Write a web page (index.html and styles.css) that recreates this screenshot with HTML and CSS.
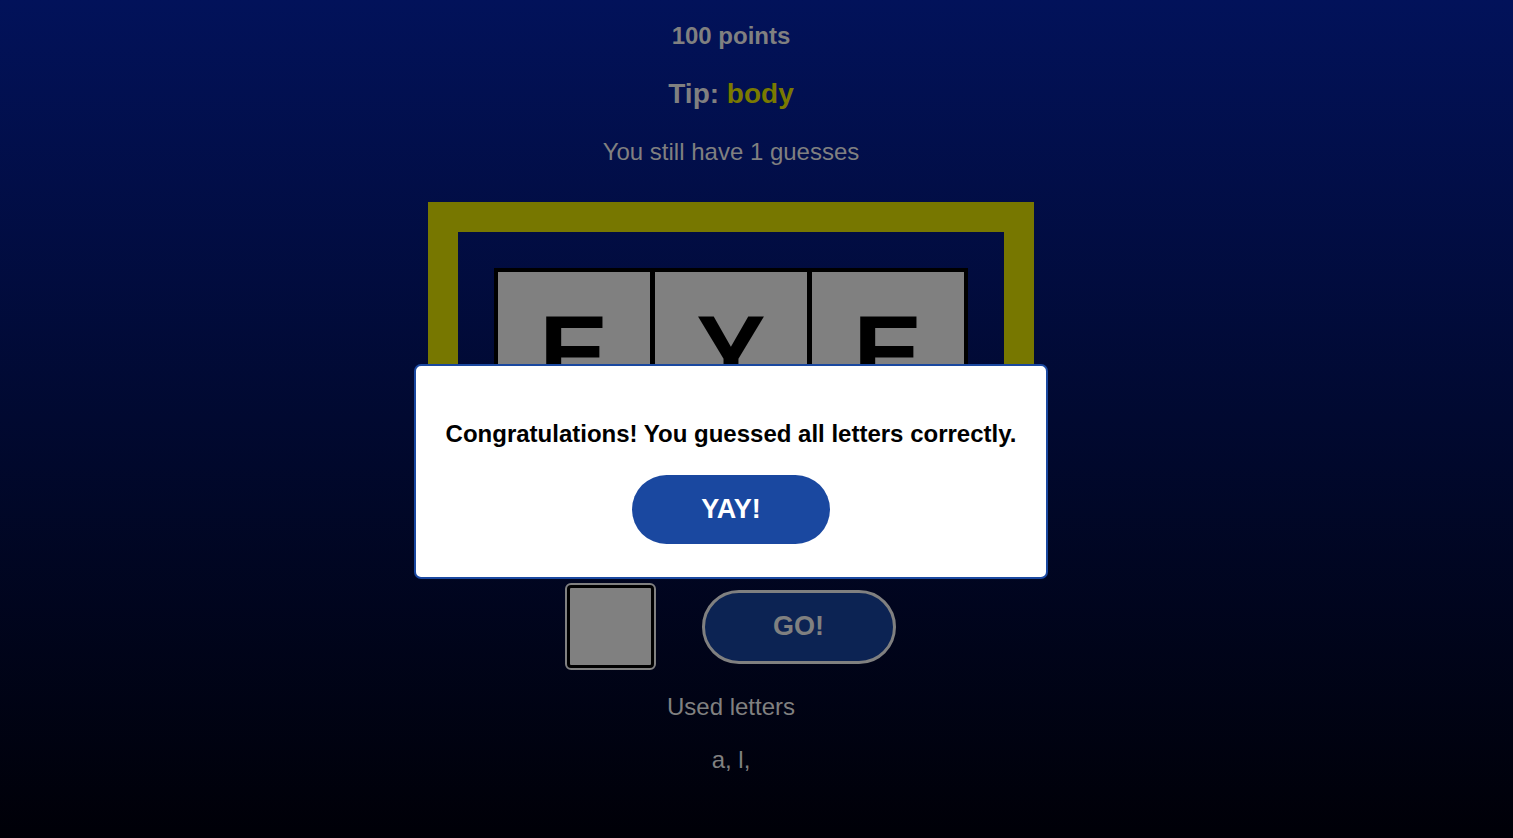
FILE: index.html
```html
<!DOCTYPE html>
<html lang="en">
<head>
<meta charset="utf-8">
<title>Guess the word</title>
<link rel="stylesheet" href="styles.css">
</head>
<body>
<main class="game">
  <h3 class="points">100 points</h3>
  <h2 class="tip">Tip: <span class="tip-word">body</span></h2>
  <p class="guesses">You still have 1 guesses</p>
  <div class="board">
    <div class="tiles">
      <div class="tile">E</div>
      <div class="tile">Y</div>
      <div class="tile">E</div>
    </div>
  </div>
  <div class="controls">
    <input class="letter-input" type="text" maxlength="1">
    <button class="go-btn">GO!</button>
  </div>
  <p class="used-title">Used letters</p>
  <p class="used-list">a, l,</p>

  <div class="modal">
    <p class="modal-text">Congratulations! You guessed all letters correctly.</p>
    <button class="yay-btn">YAY!</button>
  </div>
</main>
</body>
</html>
```

FILE: styles.css
```css
html, body {
  margin: 0;
  padding: 0;
  height: 100%;
}

body {
  background: linear-gradient(to bottom, #02125a 0%, #000007 100%);
  font-family: "Liberation Sans", Arial, sans-serif;
  color: #808080;
  overflow: hidden;
}

.game {
  position: relative;
  width: 1462px;
  display: flex;
  flex-direction: column;
  align-items: center;
  padding-top: 22px;
  box-sizing: border-box;
}

.points {
  margin: 0;
  font-size: 24px;
  line-height: 28px;
  font-weight: bold;
}

.tip {
  margin: 28px 0 0;
  font-size: 28px;
  line-height: 32px;
  font-weight: bold;
}

.tip-word {
  color: #7a7a00;
}

.guesses {
  margin: 28px 0 0;
  font-size: 24px;
  line-height: 28px;
}

.board {
  margin-top: 36px;
  border: 30px solid #777700;
  padding: 36px;
}

.tiles {
  display: flex;
  gap: 5px;
  background: #000;
  padding: 4px;
}

.tile {
  width: 152px;
  height: 160px;
  background: #808080;
  color: #000;
  font-weight: bold;
  font-size: 104px;
  line-height: 120px;
  display: flex;
  align-items: center;
  justify-content: center;
}

.controls {
  margin-top: 83px;
  display: flex;
  align-items: center;
  gap: 48px;
}

.letter-input {
  width: 87px;
  height: 83px;
  box-sizing: border-box;
  background: #808080;
  border: 3px solid #000;
  border-radius: 4px;
  outline: 2px solid #808080;
  margin: 0;
  padding: 0;
}

.go-btn {
  width: 194px;
  height: 74px;
  box-sizing: border-box;
  background: #0c2353;
  border: 3px solid #808080;
  border-radius: 37px;
  color: #808080;
  font-family: "Liberation Sans", Arial, sans-serif;
  font-weight: bold;
  font-size: 27px;
  padding: 0;
}

.used-title {
  margin: 25px 0 0;
  font-size: 24px;
  line-height: 28px;
}

.used-list {
  margin: 25px 0 0;
  font-size: 24px;
  line-height: 28px;
}

.modal {
  position: absolute;
  top: 364px;
  left: 414px;
  width: 634px;
  height: 215px;
  box-sizing: border-box;
  background: #fff;
  border: 2px solid #1a48a0;
  border-radius: 7px;
  padding-top: 54px;
  display: flex;
  flex-direction: column;
  align-items: center;
}

.modal-text {
  margin: 0;
  color: #000;
  font-weight: bold;
  font-size: 24px;
  line-height: 28px;
}

.yay-btn {
  margin-top: 27px;
  width: 198px;
  height: 69px;
  background: #1a48a0;
  border: none;
  border-radius: 35px;
  color: #fff;
  font-family: "Liberation Sans", Arial, sans-serif;
  font-weight: bold;
  font-size: 27px;
  padding: 0;
}
```
